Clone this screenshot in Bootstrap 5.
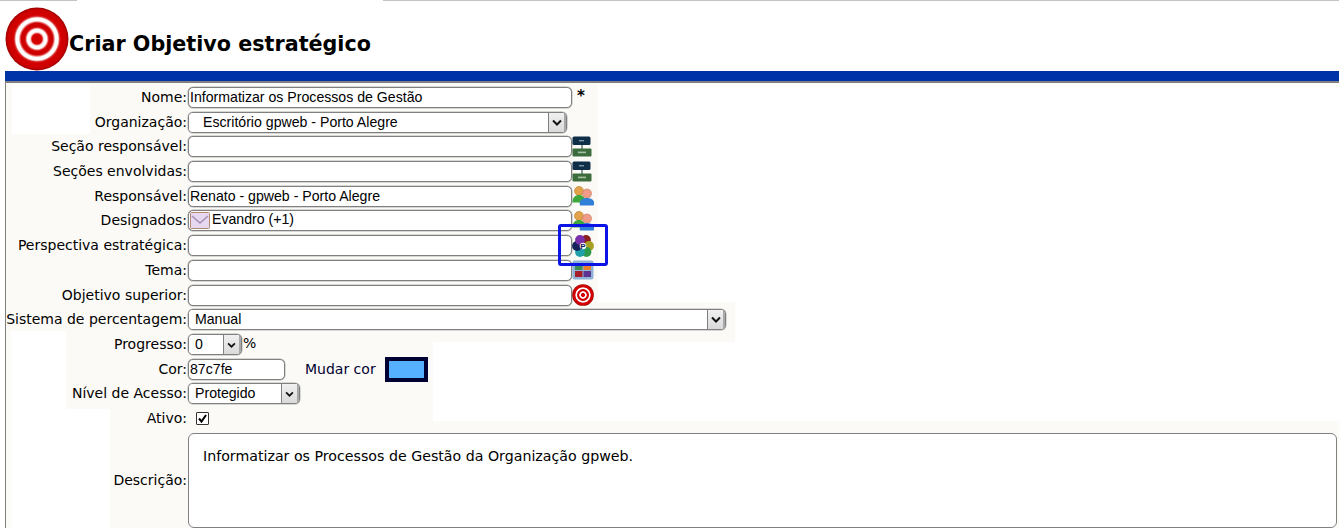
<!DOCTYPE html>
<html lang="pt-BR">
<head>
    <meta charset="UTF-8">
    <meta name="viewport" content="width=device-width, initial-scale=1.0">
    <title>Criar Objetivo estratégico</title>
    <link href="https://cdn.jsdelivr.net/npm/bootstrap@5.3.0/dist/css/bootstrap.min.css" rel="stylesheet">
    <style>
        html, body { height: 528px; overflow: hidden; }
        body {
            background: #fff;
            color: #000;
            font-family: "DejaVu Sans", Verdana, sans-serif;
            font-size: 14px;
        }
        .topo {
            height: 71px;
            padding-left: 5px;
            background:
                linear-gradient(#c4c4c4, #c4c4c4) 0 0 / 77px 1px no-repeat,
                linear-gradient(#c4c4c4, #c4c4c4) 383px 0 / 956px 1px no-repeat;
        }
        .topo svg { margin-top: 7px; flex: none; }
        .titulo {
            margin: 32px 0 0 0;
            font-size: 20.7px;
            line-height: 24px;
            font-weight: 700;
            font-family: "DejaVu Sans", Verdana, sans-serif;
        }
        .faixa {
            margin-left: 5px;
            height: 12px;
            background: #0033a8;
            border-bottom: 2px solid #808080;
        }
        /* fundo creme com os recortes brancos do formulario */
        .painel {
            height: 445px;
            margin-left: 5px;
            padding-top: 2px;
            border-left: 1px solid #808080;
            background-color: #fbfaf6;
            background-image:
                linear-gradient(#fff, #fff), linear-gradient(#fff, #fff), linear-gradient(#fff, #fff),
                linear-gradient(#fff, #fff), linear-gradient(#fff, #fff), linear-gradient(#fff, #fff);
            background-repeat: no-repeat;
            background-position: 6px 1px, 592px 0, 729px 219px, 427px 259px, 5px 248px, 5px 326px;
            background-size: 78px 50px, 741px 219px, 604px 40px, 906px 79px, 55px 78px, 99px 119px;
        }
        .linha { height: 24.73px; position: relative; }
        .rotulo {
            width: 181px;
            flex: none;
            margin: 0 1px 0 0;
            text-align: right;
            white-space: nowrap;
        }
        .form-control.campo {
            width: 384px;
            height: 21px;
            min-height: 0;
            padding: 0 1px;
            flex: none;
            color: #000;
            font-family: "Liberation Sans", Arial, sans-serif;
            font-size: 14.13px;
            line-height: 19px;
            border: 1px solid #808080;
            border-radius: 5px;
            background: #fff;
            box-shadow: 0 0 0 0.5px #b4b4b4;
        }
        .form-control.cor-campo { width: 97px; }
        .envelope { flex: none; margin-right: 2px; }
        .texto-designado { position: relative; top: -1px; }
        .caixa-sel {
            height: 21px;
            flex: none;
            border: 1px solid #808080;
            border-radius: 5px;
            overflow: hidden;
            background: #fff;
            box-shadow: 0 0 0 0.5px #b4b4b4;
        }
        .sel-org { width: 379px; }
        .sel-sistema { width: 538px; }
        .sel-progresso { width: 54px; }
        .sel-nivel { width: 112px; }
        .form-select.escolha {
            flex: 1 1 0;
            min-width: 0;
            height: 19px;
            padding: 0 0 0 6px;
            border: 0;
            border-radius: 0;
            color: #000;
            font-family: "Liberation Sans", Arial, sans-serif;
            font-size: 14.13px;
            line-height: 19px;
            background: #fff;
        }
        .form-select.escolha-org { padding-left: 14px; }
        .seta {
            width: 18px;
            flex: none;
            background: linear-gradient(#f0f0f0, #dadada);
            border-left: 1px solid #808080;
            border-right: 2px solid #a8a8a8;
        }
        .icone { flex: none; }
        .asterisco { margin-left: 5px; font-size: 15px; font-weight: 700; position: relative; top: -1px; }
        .porcento { margin-left: 1px; position: relative; top: -1px; }
        .mudar { margin-left: 20px; color: #000033; white-space: nowrap; }
        .amostra {
            width: 43px;
            height: 25px;
            margin-left: 9px;
            flex: none;
            background: #55b1ff;
            border: 4px solid #000033;
        }
        .form-check-input.marca {
            width: 13px;
            height: 13px;
            margin: 0 0 0 8px;
            border: 1px solid #333;
            border-radius: 1px;
            background-color: #fff;
            background-size: 11px 11px;
            background-image: url("data:image/svg+xml,%3csvg xmlns='http://www.w3.org/2000/svg' viewBox='0 0 11 11'%3e%3cpath fill='none' stroke='%23000' stroke-width='2' d='M2 5.5l2.5 3L9 2'/%3e%3c/svg%3e");
        }
        .linha-descricao { margin-top: 1.8px; height: 95px; }
        .form-control.descricao {
            width: 1149px;
            height: 95px;
            flex: none;
            padding: 13px 14px;
            color: #000;
            font-family: "DejaVu Sans", Verdana, sans-serif;
            font-size: 14.2px;
            line-height: 18px;
            border: 1px solid #808080;
            border-radius: 6px;
            background: #fff;
            resize: none;
        }
        .destaque {
            position: absolute;
            left: 552px;
            top: -9px;
            width: 50px;
            height: 42px;
            border: 3px solid #0a14e6;
            border-radius: 3px;
            pointer-events: none;
            z-index: 2;
        }
    </style>
</head>
<body>
    <svg width="0" height="0" class="d-block">
        <defs>
            <radialGradient id="anelVermelho" cx="50%" cy="50%" r="50%">
                <stop offset="0" stop-color="#d00000"/>
                <stop offset="0.16" stop-color="#d80000"/>
                <stop offset="0.2" stop-color="#f3b8b8"/>
                <stop offset="0.24" stop-color="#fff"/>
                <stop offset="0.31" stop-color="#fff"/>
                <stop offset="0.36" stop-color="#e04040"/>
                <stop offset="0.39" stop-color="#d00000"/>
                <stop offset="0.5" stop-color="#cc0000"/>
                <stop offset="0.54" stop-color="#e87070"/>
                <stop offset="0.58" stop-color="#fff"/>
                <stop offset="0.67" stop-color="#fff"/>
                <stop offset="0.72" stop-color="#d83030"/>
                <stop offset="0.76" stop-color="#d40000"/>
                <stop offset="0.92" stop-color="#cc0000"/>
                <stop offset="1" stop-color="#980000"/>
            </radialGradient>
            <symbol id="alvo" viewBox="0 0 64 64">
                <circle cx="32" cy="32" r="31.5" fill="url(#anelVermelho)"/>
            </symbol>
            <symbol id="organograma" viewBox="0 0 20 21">
                <path d="M10 8v5" stroke="#5c7a72" stroke-width="1.5"/>
                <rect x="0.5" y="0.5" width="18" height="8.5" rx="1.5" fill="#0e2f47"/>
                <rect x="7" y="4" width="5" height="1.4" fill="#7f98a8"/>
                <rect x="0.5" y="12.5" width="19" height="8" rx="1" fill="#3d6c3c"/>
                <rect x="6" y="15.6" width="8" height="1.6" fill="#a5c0a0"/>
            </symbol>
            <symbol id="usuarios" viewBox="0 0 22 20">
                <circle cx="7" cy="5" r="4.5" fill="#e2a24a" stroke="#b87a28" stroke-width="0.6"/>
                <path d="M0.500 16.500c-.5-5 3-7.500 6.500-7.500s7 2.500 6.500 7.500z" fill="#3fa83c"/>
                <circle cx="15" cy="7.500" r="4.500" fill="#ee9c88" stroke="#c87058" stroke-width="0.6"/>
                <path d="M8 19.500c-1.500-5.500 3-7.500 7-7.500s8.500 2 6.700 7.500z" fill="#2f7fd8"/>
            </symbol>
            <symbol id="perspectiva" viewBox="0 0 22 22">
                <circle cx="14" cy="5" r="4.900" fill="#8a1f1f"/>
                <circle cx="17" cy="11" r="4.900" fill="#a8a020"/>
                <circle cx="14.500" cy="17" r="4.900" fill="#2f9a4a"/>
                <circle cx="8" cy="17" r="4.900" fill="#20a0a8"/>
                <circle cx="5" cy="11" r="4.900" fill="#14205a"/>
                <circle cx="8" cy="5" r="4.900" fill="#7a2fa8"/>
                <circle cx="11" cy="11" r="3.300" fill="#f4f4f8"/>
                <text x="11" y="14" font-size="8" font-weight="700" text-anchor="middle" fill="#14205a" font-family="Liberation Sans, sans-serif">P</text>
            </symbol>
            <symbol id="tema" viewBox="0 0 22 20">
                <rect x="0.500" y="0.500" width="21" height="19" rx="2" fill="#8fb2d8"/>
                <rect x="3" y="4.500" width="7.500" height="5.500" fill="#3c8f50"/>
                <rect x="11.500" y="4.500" width="7.500" height="5.500" fill="#e8802c"/>
                <rect x="3" y="11" width="7.500" height="6" fill="#a81c28"/>
                <rect x="11.500" y="11" width="7.500" height="6" fill="#5c3490"/>
            </symbol>
        </defs>
    </svg>

    <div class="topo d-flex">
        <svg width="64" height="64"><use href="#alvo"/></svg>
        <h1 class="titulo">Criar Objetivo estratégico</h1>
    </div>
    <div class="faixa"></div>

    <form class="painel">
        <div class="linha d-flex align-items-center">
            <label class="rotulo">Nome:</label>
            <input type="text" class="form-control campo" value="Informatizar os Processos de Gestão">
            <span class="asterisco">*</span>
        </div>
        <div class="linha d-flex align-items-center">
            <label class="rotulo">Organização:</label>
            <div class="caixa-sel sel-org d-flex">
                <select class="form-select escolha escolha-org"><option>Escritório gpweb - Porto Alegre</option></select>
                <span class="seta d-flex align-items-center justify-content-center">
                    <svg width="10" height="7" viewBox="0 0 10 7"><path d="M1 1.500l4 4 4-4" fill="none" stroke="#111" stroke-width="2"/></svg>
                </span>
            </div>
        </div>
        <div class="linha d-flex align-items-center">
            <label class="rotulo">Seção responsável:</label>
            <input type="text" class="form-control campo">
            <svg class="icone" width="20" height="21"><use href="#organograma"/></svg>
        </div>
        <div class="linha d-flex align-items-center">
            <label class="rotulo">Seções envolvidas:</label>
            <input type="text" class="form-control campo">
            <svg class="icone" width="20" height="21"><use href="#organograma"/></svg>
        </div>
        <div class="linha d-flex align-items-center">
            <label class="rotulo">Responsável:</label>
            <input type="text" class="form-control campo" value="Renato - gpweb - Porto Alegre">
            <svg class="icone" width="22" height="20"><use href="#usuarios"/></svg>
        </div>
        <div class="linha d-flex align-items-center">
            <label class="rotulo">Designados:</label>
            <div class="form-control campo d-flex align-items-center">
                <svg class="envelope" width="20" height="17" viewBox="0 0 20 17">
                    <rect x="0.500" y="0.500" width="19" height="16" rx="1" fill="#e6d8ee" stroke="#b08a70"/>
                    <path d="M2 4l8 7 8-7" fill="none" stroke="#a88ab8" stroke-width="1.500"/>
                </svg>
                <span class="texto-designado">Evandro (+1)</span>
            </div>
            <svg class="icone" width="22" height="20"><use href="#usuarios"/></svg>
        </div>
        <div class="linha d-flex align-items-center">
            <label class="rotulo">Perspectiva estratégica:</label>
            <input type="text" class="form-control campo">
            <svg class="icone" width="22" height="22"><use href="#perspectiva"/></svg>
            <div class="destaque"></div>
        </div>
        <div class="linha d-flex align-items-center">
            <label class="rotulo">Tema:</label>
            <input type="text" class="form-control campo">
            <svg class="icone" width="22" height="20"><use href="#tema"/></svg>
        </div>
        <div class="linha d-flex align-items-center">
            <label class="rotulo">Objetivo superior:</label>
            <input type="text" class="form-control campo">
            <svg class="icone" width="22" height="22"><use href="#alvo"/></svg>
        </div>
        <div class="linha d-flex align-items-center">
            <label class="rotulo">Sistema de percentagem:</label>
            <div class="caixa-sel sel-sistema d-flex">
                <select class="form-select escolha"><option>Manual</option></select>
                <span class="seta d-flex align-items-center justify-content-center">
                    <svg width="10" height="7" viewBox="0 0 10 7"><path d="M1 1.500l4 4 4-4" fill="none" stroke="#111" stroke-width="2"/></svg>
                </span>
            </div>
        </div>
        <div class="linha d-flex align-items-center">
            <label class="rotulo">Progresso:</label>
            <div class="caixa-sel sel-progresso d-flex">
                <select class="form-select escolha"><option>0</option></select>
                <span class="seta d-flex align-items-center justify-content-center">
                    <svg width="9" height="6" viewBox="0 0 10 7"><path d="M1 1.500l4 4 4-4" fill="none" stroke="#111" stroke-width="2"/></svg>
                </span>
            </div>
            <span class="porcento">%</span>
        </div>
        <div class="linha d-flex align-items-center">
            <label class="rotulo">Cor:</label>
            <input type="text" class="form-control campo cor-campo" value="87c7fe">
            <span class="mudar">Mudar cor</span>
            <span class="amostra"></span>
        </div>
        <div class="linha d-flex align-items-center">
            <label class="rotulo">Nível de Acesso:</label>
            <div class="caixa-sel sel-nivel d-flex">
                <select class="form-select escolha"><option>Protegido</option></select>
                <span class="seta d-flex align-items-center justify-content-center">
                    <svg width="9" height="6" viewBox="0 0 10 7"><path d="M1 1.500l4 4 4-4" fill="none" stroke="#111" stroke-width="2"/></svg>
                </span>
            </div>
        </div>
        <div class="linha d-flex align-items-center">
            <label class="rotulo">Ativo:</label>
            <input type="checkbox" class="form-check-input marca" checked>
        </div>
        <div class="linha linha-descricao d-flex align-items-center">
            <label class="rotulo">Descrição:</label>
            <textarea class="form-control descricao">Informatizar os Processos de Gestão da Organização gpweb.</textarea>
        </div>
    </form>

    <script src="https://cdn.jsdelivr.net/npm/bootstrap@5.3.0/dist/js/bootstrap.bundle.min.js"></script>
</body>
</html>
